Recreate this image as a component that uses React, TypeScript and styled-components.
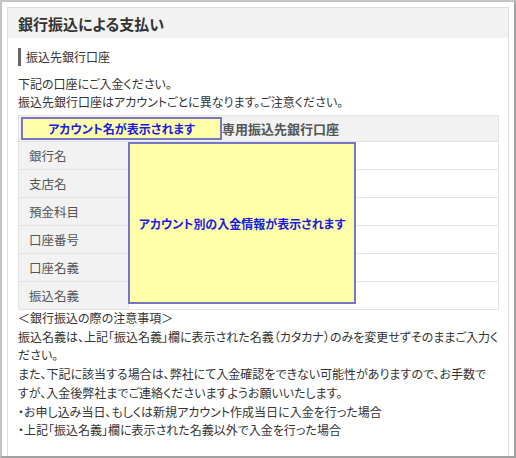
import styled, { createGlobalStyle } from 'styled-components'

const GlobalStyle = createGlobalStyle`
  html, body {
    margin: 0;
    padding: 0;
    background: #ffffff;
  }
  body {
    font-family: 'Noto Sans CJK JP', 'Noto Sans', sans-serif;
    font-feature-settings: 'palt';
    color: #333333;
  }
`

const Frame = styled.div`
  box-sizing: border-box;
  width: 516px;
  height: 458px;
  overflow: hidden;
  border: 2px solid #c4c4c4;
  border-right-color: #a2a2a2;
  border-bottom-color: #a2a2a2;
  padding: 5px 5px 0 5px;
  background: #fff;
`

const Panel = styled.div`
  border: 1px solid #dddddd;
  min-height: 470px;
`

const PanelHeader = styled.h1`
  margin: 0;
  height: 30px;
  display: flex;
  align-items: center;
  padding: 1px 0 0 10px;
  box-sizing: border-box;
  background: #f2f2f2;
  font-size: 15px;
  font-weight: bold;
  color: #333;
`

const PanelBody = styled.div`
  padding: 10px 9px 0 10px;
`

const SectionTitle = styled.h2`
  margin: 0;
  height: 18px;
  line-height: 18px;
  border-left: 3px solid #666;
  padding-left: 5px;
  font-size: 12px;
  font-weight: normal;
  color: #333;
`

const Lead = styled.p`
  margin: 9px 0 4px;
  font-size: 12px;
  line-height: 18px;
`

const TableWrap = styled.div`
  position: relative;
`

const Table = styled.table`
  width: 100%;
  border-collapse: collapse;
  font-size: 12.5px;
`

const HeadCell = styled.th`
  height: 25px;
  padding: 0 0 0 2px;
  background: #f2f2f2;
  border: 1px solid #e4e4e4;
  text-align: left;
  font-size: 13px;
  font-weight: bold;
  color: #555;
`

const HeadInner = styled.div`
  display: flex;
  align-items: center;
`

const LabelCell = styled.td`
  width: 99px;
  height: 27px;
  padding: 0 0 0 10px;
  background: #f2f2f2;
  border: 1px solid #e4e4e4;
  color: #555;
`

const ValueCell = styled.td`
  border: 1px solid #e4e4e4;
  background: #fff;
`

const Placeholder = styled.div<{ $block?: boolean }>`
  box-sizing: border-box;
  display: flex;
  align-items: center;
  justify-content: center;
  background: #ffffaa;
  border: 2px solid #7676c6;
  color: #1a1ae6;
  font-weight: bold;
  font-size: 12px;
  width: ${(p) => (p.$block ? '228px' : '201px')};
  height: ${(p) => (p.$block ? '162px' : '23px')};
`

const Overlay = styled.div`
  position: absolute;
  left: 110px;
  top: 27px;
`

const Notes = styled.div`
  margin-top: -1px;
  font-size: 12px;
  line-height: 18.7px;
  white-space: nowrap;
`

const labels = ['銀行名', '支店名', '預金科目', '口座番号', '口座名義', '振込名義']

export default function App() {
  return (
    <>
      <GlobalStyle />
      <Frame>
        <Panel>
          <PanelHeader>銀行振込による支払い</PanelHeader>
          <PanelBody>
            <SectionTitle>振込先銀行口座</SectionTitle>
            <Lead>
              下記の口座にご入金ください。
              <br />
              振込先銀行口座はアカウントごとに異なります。ご注意ください。
            </Lead>
            <TableWrap>
              <Table>
                <thead>
                  <tr>
                    <HeadCell colSpan={2}>
                      <HeadInner>
                        <Placeholder>アカウント名が表示されます</Placeholder>
                        専用振込先銀行口座
                      </HeadInner>
                    </HeadCell>
                  </tr>
                </thead>
                <tbody>
                  {labels.map((l) => (
                    <tr key={l}>
                      <LabelCell>{l}</LabelCell>
                      <ValueCell />
                    </tr>
                  ))}
                </tbody>
              </Table>
              <Overlay>
                <Placeholder $block>アカウント別の入金情報が表示されます</Placeholder>
              </Overlay>
            </TableWrap>
            <Notes>
              ＜銀行振込の際の注意事項＞
              <br />
              振込名義は、上記「振込名義」欄に表示された名義（カタカナ）のみを変更せずそのままご入力く
              <br />
              ださい。
              <br />
              また、下記に該当する場合は、弊社にて入金確認をできない可能性がありますので、お手数で
              <br />
              すが、入金後弊社までご連絡くださいますようお願いいたします。
              <br />
              ・お申し込み当日、もしくは新規アカウント作成当日に入金を行った場合
              <br />
              ・上記「振込名義」欄に表示された名義以外で入金を行った場合
            </Notes>
          </PanelBody>
        </Panel>
      </Frame>
    </>
  )
}
